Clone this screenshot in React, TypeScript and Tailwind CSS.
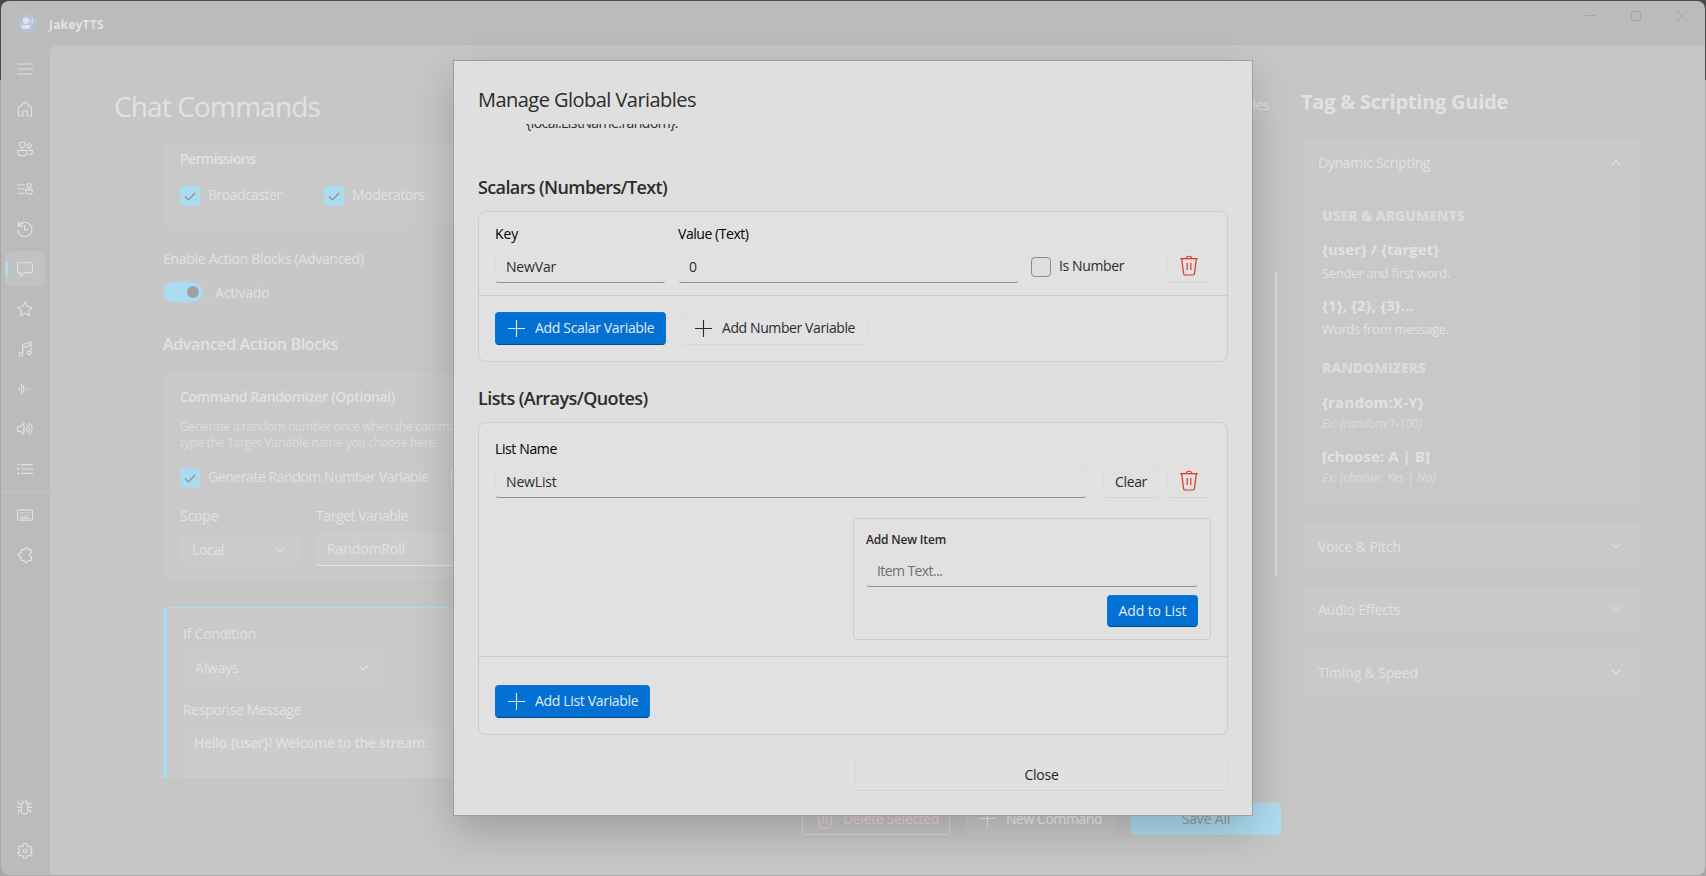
import type { ReactNode } from 'react';

function Icon({ children }: { children: ReactNode }) {
  return (
    <svg viewBox="0 0 17 17" className="size-4 shrink-0" fill="none" stroke="currentColor" strokeWidth="1.2" strokeLinecap="round" strokeLinejoin="round">
      {children}
    </svg>
  );
}

const icons: Record<string, ReactNode> = {
  menu: <path d="M.6 3.2h15.8M.6 8.5h15.8M.6 13.8h15.8" />,
  home: <path d="M1.500 7.400 8.500 1l7 6.400v8.600h-4.700v-5.500H6.200V16H1.500z" />,
  people: (
    <>
      <circle cx="5.700" cy="4" r="3" />
      <circle cx="13" cy="5" r="2.100" />
      <path d="M.7 10h9.700v2.200c0 4.800-9.700 4.800-9.700 0zM12.400 10h4v1.700c0 1.900-1.600 2.900-3.800 2.800" />
    </>
  ),
  listPerson: (
    <>
      <path d="M.6 4h7.200M.6 8.500h6.600M.6 13h7.200" />
      <circle cx="12.800" cy="5" r="2.300" />
      <path d="M9.400 9.200h7v1.600c0 4-7 4-7 0z" />
    </>
  ),
  history: (
    <>
      <path d="M1.600.800v4.400H6M1.900 5a7.500 7.500 0 1 1-1.100 4.600" />
      <path d="M8 4.600v4.600h3.400" />
    </>
  ),
  chat: <path d="M2.200 1.800h12.600a1.600 1.600 0 0 1 1.600 1.600v7.400a1.600 1.600 0 0 1-1.600 1.600H8.600l-4.400 3.600v-3.600h-2A1.600 1.600 0 0 1 .6 10.800V3.400a1.600 1.600 0 0 1 1.600-1.600z" />,
  star: <path d="m8.500 1 2.400 4.900 5.400.7-4 3.700 1 5.400-4.800-2.600-4.800 2.600 1-5.400-4-3.700 5.400-.7z" />,
  music: (
    <>
      <path d="M6 14.200V4L14.800.800v12M6 7.300l8.800-3.200" />
      <circle cx="3.900" cy="14.200" r="2" />
      <circle cx="12.700" cy="12.800" r="2" />
    </>
  ),
  wave: (
    <path strokeLinecap="butt" strokeWidth="1.060" d="M.53 8v1.100M2.660 6.400v4.200M4.780 2.100v12.800M6.910 4.200v8.500M9.030 6.900v3.200M11.160 8v1.100M13.280 8v1.100M15.400 8v1.100" />
  ),
  speaker: (
    <path d="M.6 6h3l3.700-3.500v12L3.600 11h-3zM9.400 6.400c1 1.300 1 3 0 4.200M11.400 4.400c2.100 2.500 2.100 5.700 0 8.200M13.300 2.200c3.600 3.800 3.600 8.800 0 12.600" />
  ),
  list: (
    <>
      <path d="M5 3.800h11.400M5 8.500h11.400M5 13.200h11.400" />
      <path d="M1.300 3.800h.2M1.300 8.500h.2M1.300 13.200h.2" strokeWidth="2.100" />
    </>
  ),
  keyboard: (
    <>
      <rect x=".6" y="3" width="15.800" height="11" rx="1" />
      <path d="M3.600 6.200h.2M6.400 6.200h.2M9.200 6.200h.2M12.600 6.200h.2M5 9h.2M7.900 9h.2M11 9h.2" strokeWidth="1.600" />
      <path d="M4.400 11.600h8.200" />
    </>
  ),
  puzzle: (
    <path d="M5.200 2.800h2.200c0-2.500 4.400-2.500 4.400 0h2.600a1 1 0 0 1 1 1v2.700c-2.900-.2-2.900 4.200 0 4v2.900a1 1 0 0 1-1 1h-2.600c0 2.500-4.400 2.500-4.400 0H5.200a1 1 0 0 1-1-1v-2.700c-3.400 0-3.400-4.400 0-4.400V3.800a1 1 0 0 1 1-1z" />
  ),
  bug: (
    <>
      <rect x="4.800" y="3.200" width="6.600" height="12.800" rx="3.300" />
      <path d="M6.200 3V.800M10 3V.800M.6 8.900h4M11.600 8.900h3.600M1.400 1.800v3.400h3.200M14.600 3.800v1.400h-3M1.400 15.800v-3.400h3.200M14.600 14v-1.600h-3" />
    </>
  ),
  gear: (
    <>
      <path d="M6.800 .8h3.400l.5 2.300 1.400.8 2.200-.7 1.600 2.900-1.600 1.600v1.600l1.600 1.600-1.600 2.900-2.200-.7-1.400.8-.5 2.300H6.800l-.5-2.300-1.400-.8-2.200.7-1.600-2.900 1.600-1.600V7.700L1.100 6.100l1.600-2.900 2.200.7 1.400-.8z" />
      <circle cx="8.500" cy="8.500" r="1.900" />
    </>
  ),
};

function NavItem({ name, active }: { name: string; active?: boolean }) {
  return (
    <div className={`relative flex h-9 w-10 items-center justify-center rounded-md ${active ? 'bg-[#c2c2c2]' : ''}`}>
      {active && <span className="absolute left-0 top-2.5 h-4 w-[3px] rounded-full bg-[#abdbf1]" />}
      <Icon>{icons[name]}</Icon>
    </div>
  );
}

function Chevron({ up }: { up?: boolean }) {
  return (
    <svg viewBox="0 0 10 6" className="h-[6px] w-[10px]" fill="none" stroke="currentColor" strokeWidth="1.1">
      <path d={up ? 'M1 5 5 1l4 4' : 'm1 1 4 4 4-4'} />
    </svg>
  );
}

function Trash({ className }: { className: string }) {
  return (
    <svg viewBox="0 0 18 21" className={`h-[21px] w-[18px] ${className}`} fill="none" stroke="currentColor" strokeWidth="1.2">
      <path d="M.2 3.600h17.600M6.200 3.200c.2-2.600 5.400-2.600 5.600 0M1.700 3.800 3.600 18.600q.2 1.400 1.500 1.400h7.800q1.300 0 1.500-1.400L16.300 3.800M7.200 8v7M10.800 8v7" />
    </svg>
  );
}

function Plus() {
  return (
    <svg viewBox="0 0 17 17" className="size-[17px]" fill="none" stroke="currentColor" strokeWidth="1.1">
      <path d="M8.500 0v17M0 8.500h17" />
    </svg>
  );
}

function Checked({ label, className }: { label: string; className: string }) {
  return (
    <div className="flex h-5 items-center">
      <span className="flex size-5 items-center justify-center rounded bg-[#abdbf1] text-[#8c8c8c]">
        <svg viewBox="0 0 12 9" className="mt-px h-[9px] w-3" fill="none" stroke="currentColor" strokeWidth="1.1">
          <path d="m1 4.500 3.400 3.500L11 1" />
        </svg>
      </span>
      <span className={`-mt-[2px] ml-2 whitespace-nowrap ${className}`}>{label}</span>
    </div>
  );
}

function TextBox({ value, className }: { value: string; className: string }) {
  return (
    <div className={`h-8 rounded border border-[#dcdcdc] border-b-[#8f8f8f] bg-[#e1e1e1] pl-[10px] leading-[29px] ${className}`}>{value}</div>
  );
}

function PrimaryButton({ label, className, plus }: { label: string; className: string; plus?: boolean }) {
  return (
    <div className={`flex items-center rounded border border-[#0a76d6] border-b-[#054a88] bg-[#0370d3] text-[#e1ebf5] ${className}`}>
      {plus && <Plus />}
      <span className="whitespace-nowrap">{label}</span>
    </div>
  );
}

function Accordion({ title, className }: { title: string; className: string }) {
  return (
    <div className="mt-[17px] flex h-[46px] items-center justify-between rounded border border-[#c7c7c7] bg-[#c9c9c9] pl-[15px] pr-[18px]">
      <span className={`mt-[2px] ${className}`}>{title}</span>
      <Chevron />
    </div>
  );
}

function Sidebar() {
  return (
    <nav className="flex w-[49px] shrink-0 flex-col text-[#e2e2e2]">
      <div className="flex flex-1 flex-col gap-1 pl-1 pt-[6px]">
        {['menu', 'home', 'people', 'listPerson', 'history', 'chat', 'star', 'music', 'wave', 'speaker', 'list'].map((n) => (
          <NavItem key={n} name={n} active={n === 'chat'} />
        ))}
      </div>
      <div className="h-px bg-[#c6c6c6]" />
      <div className="flex h-[383px] flex-col gap-1 pl-1 pt-[5px]">
        <NavItem name="keyboard" />
        <NavItem name="puzzle" />
        <div className="mt-auto flex flex-col gap-2 pb-[6px]">
          <NavItem name="bug" />
          <NavItem name="gear" />
        </div>
      </div>
    </nav>
  );
}

function CommandEditor() {
  return (
    <section className="w-[1167px] shrink-0 pt-[41px]">
      <div className="flex h-10 items-center justify-between">
        <h1 className="text-[28px] leading-10 tracking-[-0.86px]">Chat Commands</h1>
        <div className="mb-[2px] flex h-8 items-center rounded border border-[#c9c9c9] bg-[#c8c8c8] pl-3 pr-[11px] tracking-[-0.55px]">Variables</div>
      </div>
      <div className="ml-[17px] mt-[18px] flex">
        <div className="h-[634px] w-[1137px] overflow-hidden border-x border-[#c5c5c5] bg-[#c7c7c7] pl-[31px] pr-8">
          <div className="h-[84px] rounded-b-md border border-t-0 border-[#c4c4c4] bg-[#c9c9c9] pl-4 pt-[5px]">
            <div className="font-semibold tracking-[-0.57px]">Permissions</div>
            <div className="mt-[17px] flex">
              <div className="w-36"><Checked label="Broadcaster" className="tracking-[-0.52px]" /></div>
              <Checked label="Moderators" className="tracking-[-0.42px]" />
            </div>
          </div>
          <div className="mt-[21px] tracking-[-0.3px]">Enable Action Blocks (Advanced)</div>
          <div className="mt-[13px] flex h-5 items-center">
            <div className="flex h-5 w-10 items-center justify-end rounded-full bg-[#abdbf1] pr-1">
              <span className="size-3 rounded-full bg-[#a0a0a0]" />
            </div>
            <span className="ml-3 mt-[2px] tracking-[-0.17px]">Activado</span>
          </div>
          <div className="mt-[30px] text-base font-semibold leading-6 tracking-[-0.36px]">Advanced Action Blocks</div>
          <div className="mt-[15px] h-[211px] rounded-md border border-[#c4c4c4] bg-[#c9c9c9] pl-4 pt-[15px]">
            <div className="font-semibold tracking-[-0.38px]">Command Randomizer (Optional)</div>
            <p className="mt-3 w-[800px] text-xs leading-4 tracking-[-0.2px] text-[#dcdcdc]">
              <span className="tracking-[-0.28px]">Generate a random number once when the command runs. To use it in a response,</span>
              <br />
              type the Target Variable name you choose here.
            </p>
            <div className="mt-[17px] flex">
              <div className="w-[271px]"><Checked label="Generate Random Number Variable" className="tracking-[-0.44px]" /></div>
              <span className="size-5 rounded border border-[#dedede]" />
            </div>
            <div className="mt-[18px] flex">
              <span className="w-[136px] tracking-[-0.15px]">Scope</span>
              <span className="tracking-[-0.43px]">Target Variable</span>
            </div>
            <div className="mt-[7px] flex">
              <div className="mr-4 mt-px flex h-8 w-[120px] items-center justify-between rounded bg-[#cbcbcb] pl-3 pr-[15px] tracking-[-0.35px]">
                Local <Chevron />
              </div>
              <div className="h-[33px] w-60 rounded border-b border-[#e2e2e2] bg-[#cccccc] pl-[11px] leading-[31px] tracking-[-0.11px]">RandomRoll</div>
            </div>
          </div>
          <div className="mt-[25px] h-60 rounded-md border border-l-4 border-[#abdbf1] bg-[#c9c9c9] pl-4 pt-4">
            <div className="tracking-[-0.23px]">If Condition</div>
            <div className="mt-2 flex h-8 w-[200px] items-center justify-between rounded bg-[#cbcbcb] pl-3 pr-[15px] tracking-[-0.2px]">
              Always <Chevron />
            </div>
            <div className="mt-4 tracking-[-0.37px]">Response Message</div>
            <div className="mt-[7px] h-24 w-[900px] rounded bg-[#cccccc] pl-[11px] pt-[6px] font-semibold tracking-[-0.39px] text-[#e0e0e0]">
              Hello {'{user}'}! Welcome to the stream.
            </div>
          </div>
        </div>
        <div className="ml-[7px] mt-[127px] h-[305px] w-[2px] rounded-full bg-[#dbdbdb]" />
      </div>
      <div className="mt-[25px] flex h-8 justify-end gap-4">
        <div className="flex w-[148px] items-center rounded border border-[#f7cdd2] pb-px pl-[13px] tracking-[-0.33px] text-[#f9d0d5]">
          <Trash className="mr-[9px]" />Delete Selected
        </div>
        <div className="flex w-[149px] items-center rounded bg-[#cacaca] pb-px pl-[13px] tracking-[-0.45px] text-[#f0f0f0]">
          <Plus /><span className="ml-[10px]">New Command</span>
        </div>
        <div className="flex w-[150px] items-center justify-center rounded bg-[#aedcf1] tracking-[-0.17px] text-[#9a9a9a]">Save All</div>
      </div>
    </section>
  );
}

function Guide() {
  return (
    <aside className="ml-5 w-[339px] pt-[43px]">
      <h2 className="text-xl font-bold leading-7 tracking-[-0.24px]">Tag &amp; Scripting Guide</h2>
      <div className="pl-px pt-[23px]">
        <div className="h-[367px] rounded border border-[#c7c7c7] bg-[#c8c8c8]">
          <div className="flex h-[46px] items-center justify-between border-b border-[#c3c3c3] bg-[#c9c9c9] pl-[15px] pr-[18px]">
            <span className="tracking-[-0.31px]">Dynamic Scripting</span>
            <Chevron up />
          </div>
          <div className="pl-[19px] pt-5">
            <div className="font-extrabold tracking-[-0.1px] text-[#dcdcdc]">USER &amp; ARGUMENTS</div>
            <div className="mt-[13px] text-[15px] font-bold tracking-[0.02px]">{'{user} / {target}'}</div>
            <div className="mt-1 text-[13px] tracking-[-0.3px]">Sender and first word.</div>
            <div className="mt-3 text-[15px] font-bold tracking-[0.1px]">{'{1}, {2}, {3}...'}</div>
            <div className="mt-1 text-[13px] tracking-[-0.28px]">Words from message.</div>
            <div className="mt-[19px] font-extrabold tracking-[-0.1px] text-[#dcdcdc]">RANDOMIZERS</div>
            <div className="mt-[14px] text-[15px] font-bold tracking-[0.2px]">{'{random:X-Y}'}</div>
            <div className="mt-[2px] text-xs italic leading-5 tracking-[-0.1px] text-[#dcdcdc]">{'Ex: {random:1-100}'}</div>
            <div className="mt-3 text-[15px] font-bold tracking-[0.06px]">[choose: A | B]</div>
            <div className="mt-[2px] text-xs italic leading-5 text-[#dcdcdc]">Ex: [choose: Yes | No]</div>
          </div>
        </div>
        <Accordion title="Voice & Pitch" className="tracking-[-0.12px]" />
        <Accordion title="Audio Effects" className="tracking-[-0.23px]" />
        <Accordion title="Timing & Speed" className="tracking-[-0.14px]" />
      </div>
    </aside>
  );
}

function Dialog() {
  return (
    <div className="absolute left-[453px] top-[60px] h-[756px] w-[800px] border border-[#9f9f9f] bg-[#dfdfdf] px-6 pt-[25px] text-[#2c2c2c] shadow-[0_16px_38px_rgba(0,0,0,0.2)]">
      <h2 className="text-xl leading-7 tracking-[-0.54px]">Manage Global Variables</h2>
      <div className="mt-[10px] h-[27px] overflow-hidden rounded-b border border-t-0 border-[#dbdbdb] pl-[47px]">
        <div className="-mt-[11px] tracking-[-0.55px]">{'{local.ListName.random}.'}</div>
      </div>

      <h3 className="mt-6 text-lg font-semibold leading-6 tracking-[-0.62px]">Scalars (Numbers/Text)</h3>
      <div className="mt-3 h-[151px] rounded-lg border border-[#cccccc] bg-[#e1e1e1]">
        <div className="flex h-[84px] border-b border-[#cccccc] px-4 pt-3">
          <div className="w-[171px]">
            <div className="tracking-[-0.15px] text-black">Key</div>
            <TextBox value="NewVar" className="mt-[7px] tracking-[-0.18px]" />
          </div>
          <div className="ml-3 w-[341px]">
            <div className="tracking-[-0.45px] text-black">Value (Text)</div>
            <TextBox value="0" className="mt-[7px]" />
          </div>
          <div className="ml-3 mt-[33px] flex h-5 items-center">
            <span className="size-5 rounded border border-[#8c8c8c] bg-[#dedede]" />
            <span className="-mt-[2px] ml-2 tracking-[-0.38px]">Is Number</span>
          </div>
          <div className="ml-auto mt-[26px] flex h-[33px] w-11 items-center justify-center rounded border border-[#dcdcdc] border-b-[#d3d3d3]">
            <Trash className="-mt-[2px] text-[#e03527]" />
          </div>
        </div>
        <div className="flex gap-4 px-4 pt-4">
          <PrimaryButton plus label="Add Scalar Variable" className="h-[33px] w-[171px] gap-[10px] pb-px pl-3 tracking-[-0.33px]" />
          <div className="flex h-[33px] w-[186px] items-center gap-[10px] rounded border border-[#dcdcdc] border-b-[#d6d6d6] pb-px pl-3 tracking-[-0.4px]">
            <Plus />
            Add Number Variable
          </div>
        </div>
      </div>

      <h3 className="mt-6 text-lg font-semibold leading-6 tracking-[-0.57px]">Lists (Arrays/Quotes)</h3>
      <div className="mt-3 h-[313px] rounded-lg border border-[#cccccc] bg-[#e1e1e1]">
        <div className="h-[234px] border-b border-[#cccccc] px-4 pt-4">
          <div className="tracking-[-0.38px] text-black">List Name</div>
          <div className="mt-[6px] flex h-[33px] items-end">
            <TextBox value="NewList" className="w-[592px] tracking-[-0.15px]" />
            <div className="ml-4 flex h-8 w-14 items-center justify-center rounded border border-[#dcdcdc] border-b-[#d3d3d3] tracking-[-0.34px]">Clear</div>
            <div className="ml-2 flex h-[33px] w-11 items-center justify-center rounded border border-[#dcdcdc] border-b-[#d3d3d3]">
              <Trash className="-mt-[2px] text-[#e03527]" />
            </div>
          </div>
          <div className="ml-auto mt-5 flex h-[122px] w-[358px] flex-col rounded border border-[#cccccc] px-3 pt-[13px]">
            <div className="text-xs font-semibold leading-4 tracking-[-0.17px]">Add New Item</div>
            <TextBox value="Item Text..." className="mt-[7px] tracking-[-0.58px] text-[#707070]" />
            <PrimaryButton label="Add to List" className="mt-2 h-8 w-[91px] justify-center self-end tracking-[-0.11px]" />
          </div>
        </div>
        <div className="px-4 pt-7">
          <PrimaryButton plus label="Add List Variable" className="h-[33px] w-[155px] gap-[10px] pb-px pl-3 tracking-[-0.33px]" />
        </div>
      </div>

      <div className="ml-auto mt-6 flex h-8 w-[373px] items-center justify-center border border-[#dadada] border-b-[#d2d2d2] bg-[#e0e0e0] tracking-[-0.26px] text-[#1f1f1f]">Close</div>
    </div>
  );
}

export default function App() {
  return (
    <div className="h-[876px] w-[1706px] overflow-hidden bg-[linear-gradient(#4a4a4a_0_80px,#a8a8a8_80px)] p-px font-['Open_Sans',sans-serif] text-sm leading-5 text-[#e2e2e2]">
      <div className="flex h-full flex-col overflow-hidden rounded-lg bg-[#bbbbbb]">
        <header className="flex h-11 shrink-0 justify-between">
          <div className="flex items-center pl-[17px]">
            <svg viewBox="0 0 20 22" className="h-[21px] w-[19px]">
              <path d="M8.500.700q1.500-.8 3 0l6.500 3.700q1.500.9 1.500 2.500v8.200q0 1.600-1.500 2.500l-6.500 3.700q-1.500.8-3 0L2 17.600Q.5 16.700.5 15.100V6.900Q.5 5.300 2 4.400z" fill="#b4c1dd" />
              <circle cx="8.300" cy="8" r="3.300" fill="#e3e3e3" />
              <path d="M3.600 12.600h9.200v1.500c0 3.600-9.200 3.600-9.200 0z" fill="#e3e3e3" />
              <path d="M12.800 6c.8 1.200.8 2.800 0 4M14.600 4.800c1.400 2 1.400 4.400 0 6.400" stroke="#e3e3e3" fill="none" />
            </svg>
            <span className="ml-[12px] mt-1 text-xs font-bold tracking-[0.2px]">JakeyTTS</span>
          </div>
          <svg viewBox="0 0 138 30" className="h-[30px] w-[138px]" fill="none" stroke="#a4a4a4">
            <path d="M18 14.500h10" />
            <rect x="64.500" y="10.500" width="9" height="9" rx=".5" />
            <path d="m110 10 10 10m0-10-10 10" />
          </svg>
        </header>
        <div className="flex min-h-0 flex-1">
          <Sidebar />
          <main className="flex flex-1 rounded-tl-lg bg-[#c6c6c6] pl-16">
            <CommandEditor />
            <Guide />
          </main>
        </div>
      </div>
      <Dialog />
    </div>
  );
}
